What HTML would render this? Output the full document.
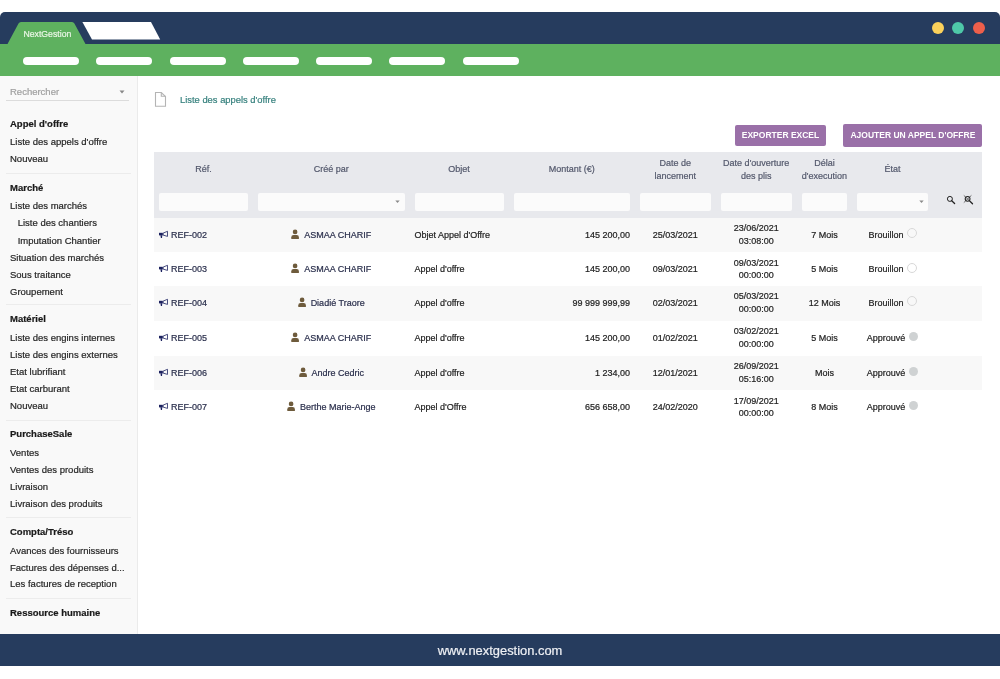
<!DOCTYPE html>
<html><head><meta charset="utf-8"><style>
html,body{margin:0;padding:0;background:#fff;width:1000px;height:679px;overflow:hidden;position:relative;font-family:"Liberation Sans", sans-serif;}
.t{position:absolute;white-space:nowrap;-webkit-text-stroke:0.2px currentColor;}
.r{position:absolute;box-sizing:border-box;}
</style></head><body>
<div id="wrap" style="position:absolute;left:0;top:0;width:1000px;height:679px;will-change:transform;">
<div class="r" style="left:0px;top:12px;width:1000px;height:32px;background:#263c5e;border-radius:5px 5px 0 0;"></div>
<svg class="r" style="left:0;top:0" width="200" height="50" viewBox="0 0 200 50">
<path d="M7.5 44 L18.5 23.5 Q19.3 22 21 22 L72 22 Q73.6 22 74.4 23.5 L85.5 44 Z" fill="#5eb15f"/>
<path d="M82.4 22 L151 22 L160.2 39.6 L92 39.6 Z" fill="#fff"/>
</svg>
<div class="t" style="left:23.50px;top:30.14px;font-size:8.7px;line-height:8.7px;color:#eaf6e6;font-weight:400;">NextGestion</div>
<div class="r" style="left:932px;top:21.6px;width:12px;height:12px;background:#fbd15b;border-radius:50%;"></div>
<div class="r" style="left:952.3px;top:21.6px;width:12px;height:12px;background:#4ec8a8;border-radius:50%;"></div>
<div class="r" style="left:973.2px;top:21.6px;width:12px;height:12px;background:#ee5f4b;border-radius:50%;"></div>
<div class="r" style="left:0px;top:44px;width:1000px;height:31.5px;background:#5eb15f;"></div>
<div class="r" style="left:23.0px;top:57px;width:56px;height:8px;background:#fff;border-radius:4px;"></div>
<div class="r" style="left:96.25px;top:57px;width:56px;height:8px;background:#fff;border-radius:4px;"></div>
<div class="r" style="left:169.5px;top:57px;width:56px;height:8px;background:#fff;border-radius:4px;"></div>
<div class="r" style="left:242.75px;top:57px;width:56px;height:8px;background:#fff;border-radius:4px;"></div>
<div class="r" style="left:316.0px;top:57px;width:56px;height:8px;background:#fff;border-radius:4px;"></div>
<div class="r" style="left:389.25px;top:57px;width:56px;height:8px;background:#fff;border-radius:4px;"></div>
<div class="r" style="left:462.5px;top:57px;width:56px;height:8px;background:#fff;border-radius:4px;"></div>
<div class="r" style="left:0px;top:75.5px;width:138px;height:558.5px;background:#f9f9f9;border-right:1px solid #ebebeb;"></div>
<div class="t" style="left:10.00px;top:86.96px;font-size:9.5px;line-height:9.5px;color:#a0a0a0;font-weight:400;">Rechercher</div>
<svg class="r" style="left:119px;top:90px" width="6" height="4"><path d="M0.5 0.5 L5.5 0.5 L3 3.5 Z" fill="#888"/></svg>
<div class="r" style="left:6px;top:100px;width:122.5px;height:1px;background:#dcdcdc;"></div>
<div class="t" style="left:10.00px;top:118.66px;font-size:9.5px;line-height:9.5px;color:#1a1a1a;font-weight:700;">Appel d&#39;offre</div>
<div class="t" style="left:10.00px;top:136.96px;font-size:9.5px;line-height:9.5px;color:#262626;font-weight:400;">Liste des appels d&#39;offre</div>
<div class="t" style="left:10.00px;top:153.96px;font-size:9.5px;line-height:9.5px;color:#262626;font-weight:400;">Nouveau</div>
<div class="r" style="left:5.5px;top:173px;width:125px;height:1px;background:#ececec;"></div>
<div class="t" style="left:10.00px;top:182.96px;font-size:9.5px;line-height:9.5px;color:#1a1a1a;font-weight:700;">Marché</div>
<div class="t" style="left:10.00px;top:200.96px;font-size:9.5px;line-height:9.5px;color:#262626;font-weight:400;">Liste des marchés</div>
<div class="t" style="left:17.70px;top:218.26px;font-size:9.5px;line-height:9.5px;color:#262626;font-weight:400;">Liste des chantiers</div>
<div class="t" style="left:17.70px;top:235.56px;font-size:9.5px;line-height:9.5px;color:#262626;font-weight:400;">Imputation Chantier</div>
<div class="t" style="left:10.00px;top:252.56px;font-size:9.5px;line-height:9.5px;color:#262626;font-weight:400;">Situation des marchés</div>
<div class="t" style="left:10.00px;top:269.76px;font-size:9.5px;line-height:9.5px;color:#262626;font-weight:400;">Sous traitance</div>
<div class="t" style="left:10.00px;top:286.76px;font-size:9.5px;line-height:9.5px;color:#262626;font-weight:400;">Groupement</div>
<div class="r" style="left:5.5px;top:304px;width:125px;height:1px;background:#ececec;"></div>
<div class="t" style="left:10.00px;top:314.46px;font-size:9.5px;line-height:9.5px;color:#1a1a1a;font-weight:700;">Matériel</div>
<div class="t" style="left:10.00px;top:332.86px;font-size:9.5px;line-height:9.5px;color:#262626;font-weight:400;">Liste des engins internes</div>
<div class="t" style="left:10.00px;top:349.96px;font-size:9.5px;line-height:9.5px;color:#262626;font-weight:400;">Liste des engins externes</div>
<div class="t" style="left:10.00px;top:366.96px;font-size:9.5px;line-height:9.5px;color:#262626;font-weight:400;">Etat lubrifiant</div>
<div class="t" style="left:10.00px;top:384.26px;font-size:9.5px;line-height:9.5px;color:#262626;font-weight:400;">Etat carburant</div>
<div class="t" style="left:10.00px;top:401.26px;font-size:9.5px;line-height:9.5px;color:#262626;font-weight:400;">Nouveau</div>
<div class="r" style="left:5.5px;top:420px;width:125px;height:1px;background:#ececec;"></div>
<div class="t" style="left:10.00px;top:429.26px;font-size:9.5px;line-height:9.5px;color:#1a1a1a;font-weight:700;">PurchaseSale</div>
<div class="t" style="left:10.00px;top:447.76px;font-size:9.5px;line-height:9.5px;color:#262626;font-weight:400;">Ventes</div>
<div class="t" style="left:10.00px;top:464.96px;font-size:9.5px;line-height:9.5px;color:#262626;font-weight:400;">Ventes des produits</div>
<div class="t" style="left:10.00px;top:481.96px;font-size:9.5px;line-height:9.5px;color:#262626;font-weight:400;">Livraison</div>
<div class="t" style="left:10.00px;top:499.26px;font-size:9.5px;line-height:9.5px;color:#262626;font-weight:400;">Livraison des produits</div>
<div class="r" style="left:5.5px;top:517px;width:125px;height:1px;background:#ececec;"></div>
<div class="t" style="left:10.00px;top:527.26px;font-size:9.5px;line-height:9.5px;color:#1a1a1a;font-weight:700;">Compta/Tréso</div>
<div class="t" style="left:10.00px;top:545.66px;font-size:9.5px;line-height:9.5px;color:#262626;font-weight:400;">Avances des fournisseurs</div>
<div class="t" style="left:10.00px;top:562.66px;font-size:9.5px;line-height:9.5px;color:#262626;font-weight:400;">Factures des dépenses d...</div>
<div class="t" style="left:10.00px;top:579.46px;font-size:9.5px;line-height:9.5px;color:#262626;font-weight:400;">Les factures de reception</div>
<div class="r" style="left:5.5px;top:598px;width:125px;height:1px;background:#ececec;"></div>
<div class="t" style="left:10.00px;top:607.66px;font-size:9.5px;line-height:9.5px;color:#1a1a1a;font-weight:700;">Ressource humaine</div>
<svg class="r" style="left:154px;top:91px" width="14" height="17" viewBox="0 0 14 17">
<path d="M1.5 1.5 L7.3 1.5 L11.5 5.5 L11.5 15.3 L1.5 15.3 Z" fill="none" stroke="#b4b4b4" stroke-width="1.1"/>
<path d="M7.3 1.5 L7.3 5.2 L11.5 5.2" fill="none" stroke="#b4b4b4" stroke-width="1.1"/>
</svg>
<div class="t" style="left:180.00px;top:95.04px;font-size:9.4px;line-height:9.4px;color:#37817e;font-weight:400;">Liste des appels d&#39;offre</div>
<div class="r" style="left:735px;top:125px;width:91px;height:21.3px;background:#9a70a8;border-radius:2px;"></div>
<div class="t" style="left:730.50px;width:100px;text-align:center;top:131.40px;font-size:8.5px;line-height:8.5px;color:#fff;font-weight:700;-webkit-text-stroke:0;">EXPORTER EXCEL</div>
<div class="r" style="left:843.2px;top:124.2px;width:139px;height:22.6px;background:#9a70a8;border-radius:2px;"></div>
<div class="t" style="left:837.90px;width:150px;text-align:center;top:131.40px;font-size:8.5px;line-height:8.5px;color:#fff;font-weight:700;-webkit-text-stroke:0;">AJOUTER UN APPEL D&#39;OFFRE</div>
<div class="r" style="left:154px;top:152px;width:828px;height:66px;background:#e8e9ed;"></div>
<div class="t" style="left:143.50px;width:120px;text-align:center;top:164.58px;font-size:9px;line-height:9px;color:#53586c;font-weight:400;">Réf.</div>
<div class="t" style="left:271.25px;width:120px;text-align:center;top:164.58px;font-size:9px;line-height:9px;color:#53586c;font-weight:400;">Créé par</div>
<div class="t" style="left:399.00px;width:120px;text-align:center;top:164.58px;font-size:9px;line-height:9px;color:#53586c;font-weight:400;">Objet</div>
<div class="t" style="left:511.75px;width:120px;text-align:center;top:164.58px;font-size:9px;line-height:9px;color:#53586c;font-weight:400;">Montant (€)</div>
<div class="t" style="left:615.25px;width:120px;text-align:center;top:158.98px;font-size:9px;line-height:9px;color:#53586c;font-weight:400;">Date de</div>
<div class="t" style="left:615.25px;width:120px;text-align:center;top:171.68px;font-size:9px;line-height:9px;color:#53586c;font-weight:400;">lancement</div>
<div class="t" style="left:696.25px;width:120px;text-align:center;top:158.98px;font-size:9px;line-height:9px;color:#53586c;font-weight:400;">Date d&#39;ouverture</div>
<div class="t" style="left:696.25px;width:120px;text-align:center;top:171.68px;font-size:9px;line-height:9px;color:#53586c;font-weight:400;">des plis</div>
<div class="t" style="left:764.50px;width:120px;text-align:center;top:158.98px;font-size:9px;line-height:9px;color:#53586c;font-weight:400;">Délai</div>
<div class="t" style="left:764.50px;width:120px;text-align:center;top:171.68px;font-size:9px;line-height:9px;color:#53586c;font-weight:400;">d&#39;execution</div>
<div class="t" style="left:832.50px;width:120px;text-align:center;top:164.58px;font-size:9px;line-height:9px;color:#53586c;font-weight:400;">État</div>
<div class="r" style="left:159px;top:193.2px;width:89px;height:17.6px;background:#fbfbfb;border-radius:2px;"></div>
<div class="r" style="left:258px;top:193.2px;width:146.5px;height:17.6px;background:#fbfbfb;border-radius:2px;"></div>
<div class="r" style="left:414.5px;top:193.2px;width:89.0px;height:17.6px;background:#fbfbfb;border-radius:2px;"></div>
<div class="r" style="left:513.5px;top:193.2px;width:116.5px;height:17.6px;background:#fbfbfb;border-radius:2px;"></div>
<div class="r" style="left:640px;top:193.2px;width:70.5px;height:17.6px;background:#fbfbfb;border-radius:2px;"></div>
<div class="r" style="left:720.5px;top:193.2px;width:71.5px;height:17.6px;background:#fbfbfb;border-radius:2px;"></div>
<div class="r" style="left:802px;top:193.2px;width:45px;height:17.6px;background:#fbfbfb;border-radius:2px;"></div>
<div class="r" style="left:857px;top:193.2px;width:71px;height:17.6px;background:#fbfbfb;border-radius:2px;"></div>
<svg class="r" style="left:395.0px;top:200px" width="5" height="4"><path d="M0.3 0.5 L4.7 0.5 L2.5 3 Z" fill="#8a8a8a"/></svg>
<svg class="r" style="left:918.5px;top:200px" width="5" height="4"><path d="M0.3 0.5 L4.7 0.5 L2.5 3 Z" fill="#8a8a8a"/></svg>
<svg class="r" style="left:944px;top:193px" width="34" height="14" viewBox="0 0 34 14">
<circle cx="5.9" cy="5.9" r="2.5" fill="none" stroke="#222" stroke-width="1"/>
<path d="M7.7 7.7 L10.6 10.5" stroke="#222" stroke-width="1.3" stroke-linecap="round"/>
<circle cx="23.6" cy="5.8" r="2.4" fill="none" stroke="#222" stroke-width="1.05"/>
<path d="M25.4 7.6 L28.5 10.7" stroke="#222" stroke-width="1.3" stroke-linecap="round"/>
<path d="M19.8 2.4 L27.4 9.6 M27.4 2.4 L19.8 9.6" stroke="#333" stroke-width="0.7"/>
</svg>
<div class="r" style="left:154px;top:218px;width:828px;height:34.4px;background:#f8f8f8;"></div>
<div class="r" style="left:154px;top:252.4px;width:828px;height:1px;background:#ebebeb;"></div>
<svg class="r" style="left:158px;top:230.00px" width="11" height="9" viewBox="0 0 11 9">
<path d="M1 2.8 L4.8 2.8 L4.8 5.4 L1 5.4 Z" fill="#1c2260"/>
<path d="M2.4 5.2 L4.3 5.2 L4.0 8 L2.9 8 Z" fill="#1c2260"/>
<path d="M5.1 3.1 L9.5 1.3 L9.5 6.4 L5.1 5.1 Z" fill="none" stroke="#1c2260" stroke-width="0.8" stroke-linejoin="round"/>
</svg>
<div class="t" style="left:171.00px;top:231.08px;font-size:9px;line-height:9px;color:#2a2f4c;font-weight:400;">REF-002</div>
<svg class="r" style="left:291.34px;top:229.00px" width="9" height="11" viewBox="0 0 9 11">
<circle cx="4.1" cy="2.9" r="2.35" fill="#6e5b3c"/>
<path d="M0.3 10 L0.3 8.3 Q0.3 6 2.6 6 L5.6 6 Q7.9 6 7.9 8.3 L7.9 10 Z" fill="#6e5b3c"/>
</svg>
<div class="t" style="left:304.14px;top:231.08px;font-size:9px;line-height:9px;color:#2a2f4c;font-weight:400;">ASMAA CHARIF</div>
<div class="t" style="left:414.50px;top:231.08px;font-size:9px;line-height:9px;color:#222;font-weight:400;">Objet Appel d&#39;Offre</div>
<div class="t" style="left:510.00px;width:120px;text-align:right;top:231.08px;font-size:9px;line-height:9px;color:#222;font-weight:400;">145 200,00</div>
<div class="t" style="left:635.25px;width:80px;text-align:center;top:231.08px;font-size:9px;line-height:9px;color:#222;font-weight:400;">25/03/2021</div>
<div class="t" style="left:716.25px;width:80px;text-align:center;top:224.28px;font-size:9px;line-height:9px;color:#222;font-weight:400;">23/06/2021</div>
<div class="t" style="left:716.25px;width:80px;text-align:center;top:236.88px;font-size:9px;line-height:9px;color:#222;font-weight:400;">03:08:00</div>
<div class="t" style="left:794.50px;width:60px;text-align:center;top:231.08px;font-size:9px;line-height:9px;color:#222;font-weight:400;">7 Mois</div>
<div class="t" style="left:868.49px;top:231.08px;font-size:9px;line-height:9px;color:#222;font-weight:400;">Brouillon</div>
<div class="r" style="left:906.51px;top:228.4px;width:10px;height:10px;background:transparent;border:1px solid #d8d8d8;border-radius:50%;"></div>
<div class="r" style="left:154px;top:252.4px;width:828px;height:33.5px;background:#ffffff;"></div>
<div class="r" style="left:154px;top:285.9px;width:828px;height:1px;background:#ebebeb;"></div>
<svg class="r" style="left:158px;top:264.40px" width="11" height="9" viewBox="0 0 11 9">
<path d="M1 2.8 L4.8 2.8 L4.8 5.4 L1 5.4 Z" fill="#1c2260"/>
<path d="M2.4 5.2 L4.3 5.2 L4.0 8 L2.9 8 Z" fill="#1c2260"/>
<path d="M5.1 3.1 L9.5 1.3 L9.5 6.4 L5.1 5.1 Z" fill="none" stroke="#1c2260" stroke-width="0.8" stroke-linejoin="round"/>
</svg>
<div class="t" style="left:171.00px;top:265.48px;font-size:9px;line-height:9px;color:#2a2f4c;font-weight:400;">REF-003</div>
<svg class="r" style="left:291.34px;top:263.40px" width="9" height="11" viewBox="0 0 9 11">
<circle cx="4.1" cy="2.9" r="2.35" fill="#6e5b3c"/>
<path d="M0.3 10 L0.3 8.3 Q0.3 6 2.6 6 L5.6 6 Q7.9 6 7.9 8.3 L7.9 10 Z" fill="#6e5b3c"/>
</svg>
<div class="t" style="left:304.14px;top:265.48px;font-size:9px;line-height:9px;color:#2a2f4c;font-weight:400;">ASMAA CHARIF</div>
<div class="t" style="left:414.50px;top:265.48px;font-size:9px;line-height:9px;color:#222;font-weight:400;">Appel d&#39;offre</div>
<div class="t" style="left:510.00px;width:120px;text-align:right;top:265.48px;font-size:9px;line-height:9px;color:#222;font-weight:400;">145 200,00</div>
<div class="t" style="left:635.25px;width:80px;text-align:center;top:265.48px;font-size:9px;line-height:9px;color:#222;font-weight:400;">09/03/2021</div>
<div class="t" style="left:716.25px;width:80px;text-align:center;top:258.68px;font-size:9px;line-height:9px;color:#222;font-weight:400;">09/03/2021</div>
<div class="t" style="left:716.25px;width:80px;text-align:center;top:271.28px;font-size:9px;line-height:9px;color:#222;font-weight:400;">00:00:00</div>
<div class="t" style="left:794.50px;width:60px;text-align:center;top:265.48px;font-size:9px;line-height:9px;color:#222;font-weight:400;">5 Mois</div>
<div class="t" style="left:868.49px;top:265.48px;font-size:9px;line-height:9px;color:#222;font-weight:400;">Brouillon</div>
<div class="r" style="left:906.51px;top:262.8px;width:10px;height:10px;background:transparent;border:1px solid #d8d8d8;border-radius:50%;"></div>
<div class="r" style="left:154px;top:285.9px;width:828px;height:35.3px;background:#f8f8f8;"></div>
<div class="r" style="left:154px;top:321.2px;width:828px;height:1px;background:#ebebeb;"></div>
<svg class="r" style="left:158px;top:297.90px" width="11" height="9" viewBox="0 0 11 9">
<path d="M1 2.8 L4.8 2.8 L4.8 5.4 L1 5.4 Z" fill="#1c2260"/>
<path d="M2.4 5.2 L4.3 5.2 L4.0 8 L2.9 8 Z" fill="#1c2260"/>
<path d="M5.1 3.1 L9.5 1.3 L9.5 6.4 L5.1 5.1 Z" fill="none" stroke="#1c2260" stroke-width="0.8" stroke-linejoin="round"/>
</svg>
<div class="t" style="left:171.00px;top:298.98px;font-size:9px;line-height:9px;color:#2a2f4c;font-weight:400;">REF-004</div>
<svg class="r" style="left:297.84px;top:296.90px" width="9" height="11" viewBox="0 0 9 11">
<circle cx="4.1" cy="2.9" r="2.35" fill="#6e5b3c"/>
<path d="M0.3 10 L0.3 8.3 Q0.3 6 2.6 6 L5.6 6 Q7.9 6 7.9 8.3 L7.9 10 Z" fill="#6e5b3c"/>
</svg>
<div class="t" style="left:310.64px;top:298.98px;font-size:9px;line-height:9px;color:#2a2f4c;font-weight:400;">Diadié Traore</div>
<div class="t" style="left:414.50px;top:298.98px;font-size:9px;line-height:9px;color:#222;font-weight:400;">Appel d&#39;offre</div>
<div class="t" style="left:510.00px;width:120px;text-align:right;top:298.98px;font-size:9px;line-height:9px;color:#222;font-weight:400;">99 999 999,99</div>
<div class="t" style="left:635.25px;width:80px;text-align:center;top:298.98px;font-size:9px;line-height:9px;color:#222;font-weight:400;">02/03/2021</div>
<div class="t" style="left:716.25px;width:80px;text-align:center;top:292.18px;font-size:9px;line-height:9px;color:#222;font-weight:400;">05/03/2021</div>
<div class="t" style="left:716.25px;width:80px;text-align:center;top:304.78px;font-size:9px;line-height:9px;color:#222;font-weight:400;">00:00:00</div>
<div class="t" style="left:794.50px;width:60px;text-align:center;top:298.98px;font-size:9px;line-height:9px;color:#222;font-weight:400;">12 Mois</div>
<div class="t" style="left:868.49px;top:298.98px;font-size:9px;line-height:9px;color:#222;font-weight:400;">Brouillon</div>
<div class="r" style="left:906.51px;top:296.3px;width:10px;height:10px;background:transparent;border:1px solid #d8d8d8;border-radius:50%;"></div>
<div class="r" style="left:154px;top:321.2px;width:828px;height:34.7px;background:#ffffff;"></div>
<div class="r" style="left:154px;top:355.9px;width:828px;height:1px;background:#ebebeb;"></div>
<svg class="r" style="left:158px;top:333.20px" width="11" height="9" viewBox="0 0 11 9">
<path d="M1 2.8 L4.8 2.8 L4.8 5.4 L1 5.4 Z" fill="#1c2260"/>
<path d="M2.4 5.2 L4.3 5.2 L4.0 8 L2.9 8 Z" fill="#1c2260"/>
<path d="M5.1 3.1 L9.5 1.3 L9.5 6.4 L5.1 5.1 Z" fill="none" stroke="#1c2260" stroke-width="0.8" stroke-linejoin="round"/>
</svg>
<div class="t" style="left:171.00px;top:334.28px;font-size:9px;line-height:9px;color:#2a2f4c;font-weight:400;">REF-005</div>
<svg class="r" style="left:291.34px;top:332.20px" width="9" height="11" viewBox="0 0 9 11">
<circle cx="4.1" cy="2.9" r="2.35" fill="#6e5b3c"/>
<path d="M0.3 10 L0.3 8.3 Q0.3 6 2.6 6 L5.6 6 Q7.9 6 7.9 8.3 L7.9 10 Z" fill="#6e5b3c"/>
</svg>
<div class="t" style="left:304.14px;top:334.28px;font-size:9px;line-height:9px;color:#2a2f4c;font-weight:400;">ASMAA CHARIF</div>
<div class="t" style="left:414.50px;top:334.28px;font-size:9px;line-height:9px;color:#222;font-weight:400;">Appel d&#39;offre</div>
<div class="t" style="left:510.00px;width:120px;text-align:right;top:334.28px;font-size:9px;line-height:9px;color:#222;font-weight:400;">145 200,00</div>
<div class="t" style="left:635.25px;width:80px;text-align:center;top:334.28px;font-size:9px;line-height:9px;color:#222;font-weight:400;">01/02/2021</div>
<div class="t" style="left:716.25px;width:80px;text-align:center;top:327.48px;font-size:9px;line-height:9px;color:#222;font-weight:400;">03/02/2021</div>
<div class="t" style="left:716.25px;width:80px;text-align:center;top:340.08px;font-size:9px;line-height:9px;color:#222;font-weight:400;">00:00:00</div>
<div class="t" style="left:794.50px;width:60px;text-align:center;top:334.28px;font-size:9px;line-height:9px;color:#222;font-weight:400;">5 Mois</div>
<div class="t" style="left:866.74px;top:334.28px;font-size:9px;line-height:9px;color:#222;font-weight:400;">Approuvé</div>
<div class="r" style="left:908.76px;top:332.1px;width:9px;height:9px;background:#cfd2d3;border-radius:50%;"></div>
<div class="r" style="left:154px;top:355.9px;width:828px;height:34.5px;background:#f8f8f8;"></div>
<div class="r" style="left:154px;top:390.4px;width:828px;height:1px;background:#ebebeb;"></div>
<svg class="r" style="left:158px;top:367.90px" width="11" height="9" viewBox="0 0 11 9">
<path d="M1 2.8 L4.8 2.8 L4.8 5.4 L1 5.4 Z" fill="#1c2260"/>
<path d="M2.4 5.2 L4.3 5.2 L4.0 8 L2.9 8 Z" fill="#1c2260"/>
<path d="M5.1 3.1 L9.5 1.3 L9.5 6.4 L5.1 5.1 Z" fill="none" stroke="#1c2260" stroke-width="0.8" stroke-linejoin="round"/>
</svg>
<div class="t" style="left:171.00px;top:368.98px;font-size:9px;line-height:9px;color:#2a2f4c;font-weight:400;">REF-006</div>
<svg class="r" style="left:298.59px;top:366.90px" width="9" height="11" viewBox="0 0 9 11">
<circle cx="4.1" cy="2.9" r="2.35" fill="#6e5b3c"/>
<path d="M0.3 10 L0.3 8.3 Q0.3 6 2.6 6 L5.6 6 Q7.9 6 7.9 8.3 L7.9 10 Z" fill="#6e5b3c"/>
</svg>
<div class="t" style="left:311.39px;top:368.98px;font-size:9px;line-height:9px;color:#2a2f4c;font-weight:400;">Andre Cedric</div>
<div class="t" style="left:414.50px;top:368.98px;font-size:9px;line-height:9px;color:#222;font-weight:400;">Appel d&#39;offre</div>
<div class="t" style="left:510.00px;width:120px;text-align:right;top:368.98px;font-size:9px;line-height:9px;color:#222;font-weight:400;">1 234,00</div>
<div class="t" style="left:635.25px;width:80px;text-align:center;top:368.98px;font-size:9px;line-height:9px;color:#222;font-weight:400;">12/01/2021</div>
<div class="t" style="left:716.25px;width:80px;text-align:center;top:362.18px;font-size:9px;line-height:9px;color:#222;font-weight:400;">26/09/2021</div>
<div class="t" style="left:716.25px;width:80px;text-align:center;top:374.78px;font-size:9px;line-height:9px;color:#222;font-weight:400;">05:16:00</div>
<div class="t" style="left:794.50px;width:60px;text-align:center;top:368.98px;font-size:9px;line-height:9px;color:#222;font-weight:400;">Mois</div>
<div class="t" style="left:866.74px;top:368.98px;font-size:9px;line-height:9px;color:#222;font-weight:400;">Approuvé</div>
<div class="r" style="left:908.76px;top:366.8px;width:9px;height:9px;background:#cfd2d3;border-radius:50%;"></div>
<div class="r" style="left:154px;top:390.4px;width:828px;height:34.5px;background:#ffffff;"></div>
<svg class="r" style="left:158px;top:402.40px" width="11" height="9" viewBox="0 0 11 9">
<path d="M1 2.8 L4.8 2.8 L4.8 5.4 L1 5.4 Z" fill="#1c2260"/>
<path d="M2.4 5.2 L4.3 5.2 L4.0 8 L2.9 8 Z" fill="#1c2260"/>
<path d="M5.1 3.1 L9.5 1.3 L9.5 6.4 L5.1 5.1 Z" fill="none" stroke="#1c2260" stroke-width="0.8" stroke-linejoin="round"/>
</svg>
<div class="t" style="left:171.00px;top:403.48px;font-size:9px;line-height:9px;color:#2a2f4c;font-weight:400;">REF-007</div>
<svg class="r" style="left:287.08px;top:401.40px" width="9" height="11" viewBox="0 0 9 11">
<circle cx="4.1" cy="2.9" r="2.35" fill="#6e5b3c"/>
<path d="M0.3 10 L0.3 8.3 Q0.3 6 2.6 6 L5.6 6 Q7.9 6 7.9 8.3 L7.9 10 Z" fill="#6e5b3c"/>
</svg>
<div class="t" style="left:299.88px;top:403.48px;font-size:9px;line-height:9px;color:#2a2f4c;font-weight:400;">Berthe Marie-Ange</div>
<div class="t" style="left:414.50px;top:403.48px;font-size:9px;line-height:9px;color:#222;font-weight:400;">Appel d&#39;Offre</div>
<div class="t" style="left:510.00px;width:120px;text-align:right;top:403.48px;font-size:9px;line-height:9px;color:#222;font-weight:400;">656 658,00</div>
<div class="t" style="left:635.25px;width:80px;text-align:center;top:403.48px;font-size:9px;line-height:9px;color:#222;font-weight:400;">24/02/2020</div>
<div class="t" style="left:716.25px;width:80px;text-align:center;top:396.68px;font-size:9px;line-height:9px;color:#222;font-weight:400;">17/09/2021</div>
<div class="t" style="left:716.25px;width:80px;text-align:center;top:409.28px;font-size:9px;line-height:9px;color:#222;font-weight:400;">00:00:00</div>
<div class="t" style="left:794.50px;width:60px;text-align:center;top:403.48px;font-size:9px;line-height:9px;color:#222;font-weight:400;">8 Mois</div>
<div class="t" style="left:866.74px;top:403.48px;font-size:9px;line-height:9px;color:#222;font-weight:400;">Approuvé</div>
<div class="r" style="left:908.76px;top:401.3px;width:9px;height:9px;background:#cfd2d3;border-radius:50%;"></div>
<div class="r" style="left:0px;top:634px;width:1000px;height:31.6px;background:#263c5e;"></div>
<div class="t" style="left:350.00px;width:300px;text-align:center;top:645.28px;font-size:12.9px;line-height:12.9px;color:#eef0f4;font-weight:400;">www.nextgestion.com</div>
</div>
</body></html>
